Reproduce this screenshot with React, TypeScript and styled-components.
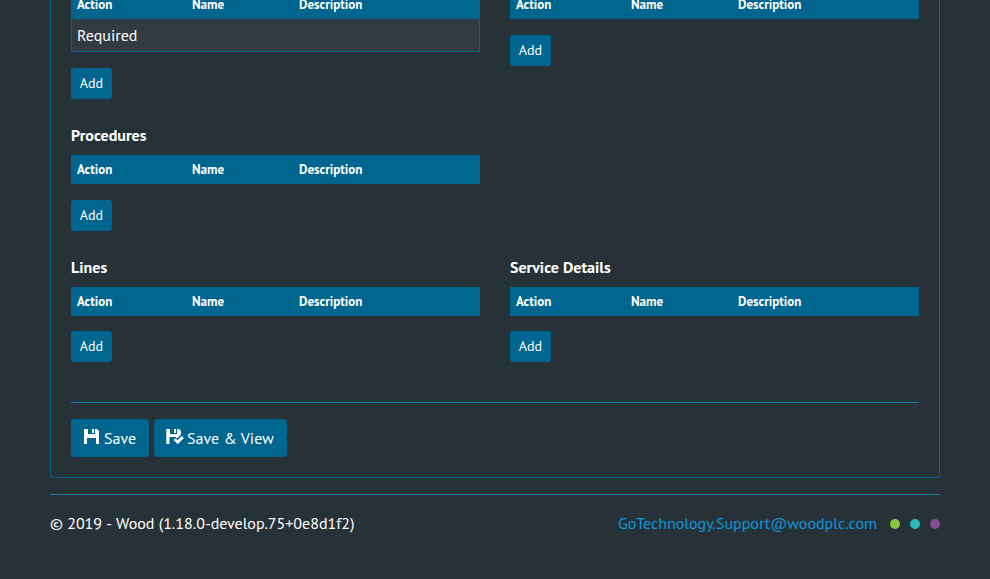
import React from 'react';
import styled, { createGlobalStyle } from 'styled-components';

const GlobalStyle = createGlobalStyle`
  *, *::before, *::after { box-sizing: border-box; }
  body {
    margin: 0;
    background: #263238;
    color: #fff;
    font: 400 16px/24px "PT Sans", "Lato", sans-serif;
  }
`;

const Page = styled.div`
  height: 579px;
  padding: 0 50px;
  overflow: hidden;
`;

const Panel = styled.section`
  height: 478px;
  padding: 0 20px;
  border: 1px solid #006690;
  border-top: 0;
  border-radius: 0 0 4px 4px;
`;

const Columns = styled.div<{ $height: number }>`
  display: grid;
  grid-template-columns: 409px 409px;
  column-gap: 30px;
  align-items: start;
  height: ${(p) => p.$height}px;
`;

const Block = styled.div<{ $clipped?: boolean }>`
  margin-top: ${(p) => (p.$clipped ? -10 : 0)}px;
`;

const Heading = styled.h6`
  margin: 0 0 8px;
  font-size: 16px;
  font-weight: 700;
  line-height: 24px;
`;

const TableHead = styled.div`
  display: grid;
  grid-template-columns: 115px 107px 1fr;
  height: 29px;
  padding: 0 6px;
  background: #006690;
  font-size: 13px;
  font-weight: 700;
  line-height: 29px;
`;

const TableRow = styled.div`
  height: 33px;
  padding: 0 5px;
  border: 1px solid #006690;
  border-top: 0;
  background: #323b41;
  line-height: 32px;
`;

const AddButton = styled.button<{ $gap: number }>`
  display: block;
  width: 41px;
  height: 31px;
  margin: ${(p) => p.$gap}px 0 0;
  padding: 0;
  border: 0;
  border-radius: 3px;
  background: #006690;
  color: #fff;
  font: 400 14px/31px "PT Sans", "Lato", sans-serif;
`;

const Divider = styled.hr<{ $top?: number }>`
  height: 1px;
  margin: ${(p) => p.$top ?? 0}px 0 0;
  border: 0;
  background: #157ba3;
`;

const Actions = styled.div`
  display: flex;
  gap: 5px;
  margin-top: 16px;
`;

const ActionButton = styled.button<{ $width: number; $gap: number }>`
  display: flex;
  align-items: center;
  gap: ${(p) => p.$gap}px;
  width: ${(p) => p.$width}px;
  height: 38px;
  padding: 0 0 0 12px;
  border: 0;
  border-radius: 4px;
  background: #006690;
  color: #fff;
  font: 400 16px/38px "PT Sans", "Lato", sans-serif;
  word-spacing: 0.3px;
  white-space: nowrap;

  svg {
    flex: none;
    margin-bottom: 3px;
  }
`;

const Footer = styled.footer`
  display: flex;
  align-items: center;
  justify-content: space-between;
  margin-top: 18px;
`;

const FooterText = styled.span`
  margin-top: -2px;
`;

const Dash = styled.span`
  font-kerning: none;
`;

const Contact = styled.div`
  display: flex;
  align-items: center;
  gap: 13px;
`;

const MailLink = styled.a`
  margin-top: -2px;
  color: #0d96de;
  text-decoration: none;
`;

const Dots = styled.div`
  display: flex;
  gap: 10px;
`;

const Dot = styled.span<{ $color: string }>`
  width: 10px;
  height: 10px;
  border-radius: 50%;
  background: ${(p) => p.$color};
`;

const SaveIcon = () => (
  <svg width="16" height="15" viewBox="-1 0 16 15" fill="currentColor">
    <path fillRule="evenodd" d="M0 0H4V5H11V0H13L15 2V15H12V9H3V15H0ZM8 0H10V4H8Z" />
  </svg>
);

const SaveViewIcon = () => (
  <svg width="18" height="15" viewBox="0 0 18 15" fill="currentColor">
    <path d="M0.3 0H4V5H11V0H13L15 2V5.5L11 9.5L9.5 8H3.5V15H0.3ZM8 0H10V4H8Z" />
    <path d="M7.5 11L9.3 9.3L11.6 11.3L15.8 6.9L18 9L11.7 15.2Z" />
  </svg>
);

interface TableProps {
  title?: string;
  row?: string;
  gap?: number;
}

const LinkTable = ({ title, row, gap = 16 }: TableProps) => (
  <Block $clipped={!title}>
    {title && <Heading>{title}</Heading>}
    <TableHead>
      <span>Action</span>
      <span>Name</span>
      <span>Description</span>
    </TableHead>
    {row && <TableRow>{row}</TableRow>}
    <AddButton $gap={gap}>Add</AddButton>
  </Block>
);

export default function App() {
  return (
    <>
      <GlobalStyle />
      <Page>
        <Panel>
          <Columns $height={123}>
            <LinkTable row="Required" />
            <LinkTable />
          </Columns>
          <Columns $height={132}>
            <LinkTable title="Procedures" />
          </Columns>
          <Columns $height={147}>
            <LinkTable title="Lines" gap={15} />
            <LinkTable title="Service Details" gap={15} />
          </Columns>
          <Divider />
          <Actions>
            <ActionButton $width={78} $gap={5}>
              <SaveIcon />
              Save
            </ActionButton>
            <ActionButton $width={133} $gap={3}>
              <SaveViewIcon />
              Save &amp; View
            </ActionButton>
          </Actions>
        </Panel>
        <Divider $top={16} />
        <Footer>
          <FooterText>
            © 2019 <Dash>-</Dash> Wood (1.18.0-develop.75+0e8d1f2)
          </FooterText>
          <Contact>
            <MailLink>GoTechnology.Support@woodplc.com</MailLink>
            <Dots>
              <Dot $color="#8cc63f" />
              <Dot $color="#2bbbb4" />
              <Dot $color="#874d92" />
            </Dots>
          </Contact>
        </Footer>
      </Page>
    </>
  );
}
